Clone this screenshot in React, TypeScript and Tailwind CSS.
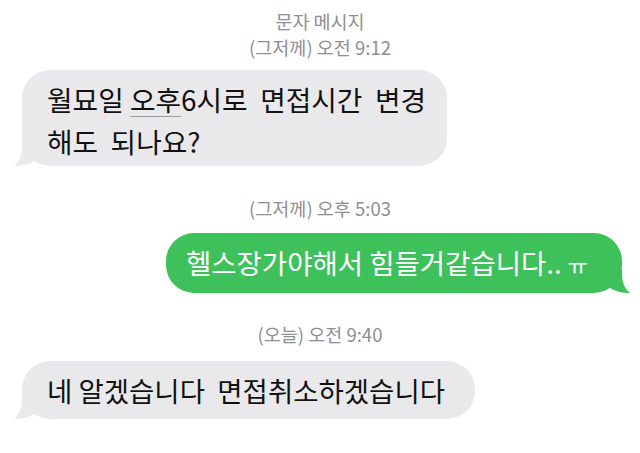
import React from 'react';

const FONT = "font-['Noto_Sans_CJK_KR','Noto_Sans',sans-serif]";

function Tail({ color, side }: { color: string; side: 'left' | 'right' }) {
  const pos = side === 'left' ? 'left-[-10px]' : 'right-[-10px] -scale-x-100';
  return (
    <svg className={`absolute bottom-0 ${pos}`} width="30" height="24" viewBox="0 0 30 24">
      <path d="M10 0 L10 4 C10 14 7 20 2 24 C10 24 17 22 22 19 L30 19 L30 0 Z" fill={color} />
    </svg>
  );
}

function Stamp({ children }: { children: React.ReactNode }) {
  return <div className="text-center text-[18.5px] leading-[26px] text-[#8e8e93]">{children}</div>;
}

export default function App() {
  return (
    <div className={`w-[640px] h-[453px] bg-white overflow-hidden flex flex-col ${FONT}`}>
      <div className="pt-[8px]">
        <Stamp>문자 메시지</Stamp>
        <Stamp>(그저께) 오전 9:12</Stamp>
      </div>

      <div className="mt-[10px] pl-[22px] flex">
        <div className="relative bg-[#e9e9eb] rounded-[28px] pl-[25px] pr-[21px] pt-[8px] pb-[4px] text-[27.8px] leading-[42px] text-[#111]">
          <div className="whitespace-pre">
            월묘일 <span className="underline decoration-[#9a9a9f] decoration-1 underline-offset-[5px]">오후</span>6시로  면접시간  변경
          </div>
          <div className="whitespace-pre">해도  되나요?</div>
          <Tail color="#e9e9eb" side="left" />
        </div>
      </div>

      <div className="mt-[29px]">
        <Stamp>(그저께) 오후 5:03</Stamp>
      </div>

      <div className="mt-[12px] pr-[18px] flex justify-end">
        <div className="relative bg-[#3ec15a] rounded-[28px] pl-[20px] pr-[34px] py-[8px] text-[27.5px] leading-[42px] text-white whitespace-pre">
          헬스장가야해서 힘들거같습니다.. <span className="text-[22px]">ㅠ</span>
          <Tail color="#3ec15a" side="right" />
        </div>
      </div>

      <div className="mt-[28px]">
        <Stamp>(오늘) 오전 9:40</Stamp>
      </div>

      <div className="mt-[14px] pl-[22px] flex">
        <div className="relative bg-[#e9e9eb] rounded-[28px] pl-[25px] pr-[30px] py-[8px] text-[27.5px] leading-[42px] text-[#111] whitespace-pre">
          네 알겠습니다  면접취소하겠습니다
          <Tail color="#e9e9eb" side="left" />
        </div>
      </div>
    </div>
  );
}
